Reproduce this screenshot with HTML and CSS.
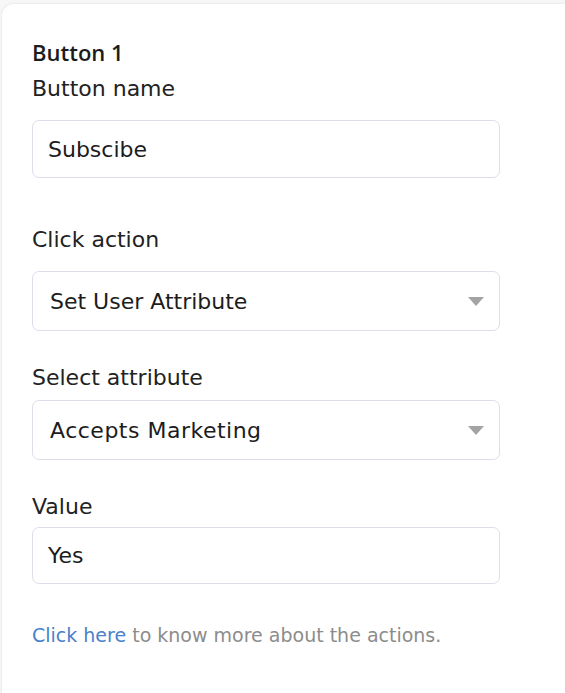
FILE: index.html
```html
<!DOCTYPE html>
<html>
<head>
<meta charset="utf-8">
<link rel="stylesheet" href="styles.css">
</head>
<body>
<div class="card">
  <div class="title">Button 1</div>
  <div class="field field-first">
    <div class="label">Button name</div>
    <div class="control control-text">Subscibe</div>
  </div>
  <div class="field field-wide">
    <div class="label">Click action</div>
    <div class="control select">
      <span>Set User Attribute</span>
      <span class="caret"></span>
    </div>
  </div>
  <div class="field field-tight">
    <div class="label">Select attribute</div>
    <div class="control select">
      <span class="wide">Accepts Marketing</span>
      <span class="caret"></span>
    </div>
  </div>
  <div class="field field-last">
    <div class="label">Value</div>
    <div class="control control-value">Yes</div>
  </div>
  <p class="help"><a class="link" href="#">Click here</a> to know more about the actions.</p>
</div>
</body>
</html>
```

FILE: styles.css
```css
html, body {
  margin: 0;
  padding: 0;
  height: 100%;
}
body {
  background: #f7f7f8;
  font-family: "DejaVu Sans", "Open Sans", sans-serif;
  color: #222222;
  overflow: hidden;
}
.card {
  margin: 4px -20px 0 2px;
  min-height: 700px;
  background: #ffffff;
  border-radius: 12px 0 0 0;
  box-shadow: 0 0 3px rgba(0, 0, 0, 0.10);
  padding: 33px 0 0 30px;
  box-sizing: border-box;
}
.title {
  font-family: "Open Sans", sans-serif;
  font-size: 22px;
  font-weight: 600;
  line-height: 30px;
  color: #1c1c1c;
}
.field {
  width: 468px;
}
.field-first {
  margin-top: 7px;
}
.field-first .label {
  margin-bottom: 16px;
}
.field-wide {
  margin-top: 47px;
}
.field-wide .label {
  margin-bottom: 16px;
}
.field-tight {
  margin-top: 32px;
}
.field-tight .label {
  margin-bottom: 7px;
}
.field-last {
  margin-top: 32px;
}
.field-last .label {
  margin-bottom: 5px;
}
.label {
  font-size: 22px;
  line-height: 30px;
  color: #222222;
}
.control {
  box-sizing: border-box;
  height: 60px;
  border: 1px solid #dcdfea;
  border-radius: 7px;
  padding: 0 15px 0 15px;
  display: flex;
  align-items: center;
  font-size: 22px;
  color: #1c1c1c;
  background: #fff;
}
.control-text {
  height: 58px;
}
.control-value {
  height: 57px;
}
.select {
  justify-content: space-between;
  padding-left: 17px;
}
.wide {
  letter-spacing: 0.5px;
}
.caret {
  width: 0;
  height: 0;
  border-left: 8.5px solid transparent;
  border-right: 8.5px solid transparent;
  border-top: 9px solid #a3a3a3;
}
.help {
  margin: 38px 0 0 0;
  font-size: 19px;
  line-height: 26px;
  color: #8c8c8c;
}
.link {
  color: #4a7fcb;
  text-decoration: none;
}
```
